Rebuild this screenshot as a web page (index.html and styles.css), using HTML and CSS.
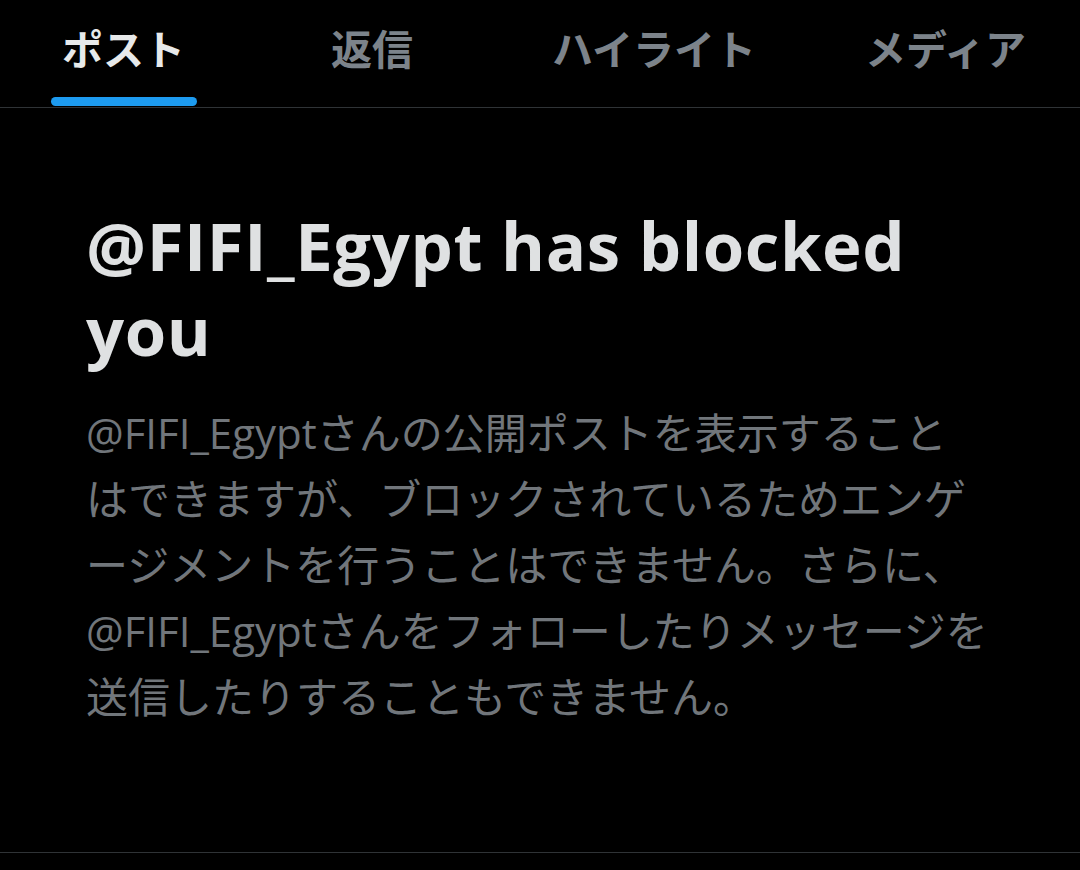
FILE: index.html
```html
<!DOCTYPE html>
<html lang="ja">
<head>
<meta charset="utf-8">
<title>Blocked</title>
<link rel="stylesheet" href="styles.css">
</head>
<body>
<nav class="tabs">
  <div class="tab tab-active"><span class="tab-label">ポスト</span><span class="tab-indicator"></span></div>
  <div class="tab"><span class="tab-label">返信</span></div>
  <div class="tab"><span class="tab-label">ハイライト</span></div>
  <div class="tab"><span class="tab-label">メディア</span></div>
</nav>
<main class="blocked">
  <h1 class="blocked-title">@FIFI_Egypt has blocked you</h1>
  <p class="blocked-text">@FIFI_Egyptさんの公開ポストを表示すること<br>はできますが、ブロックされているためエンゲ<br>ージメントを行うことはできません。さらに、<br>@FIFI_Egyptさんをフォローしたりメッセージを<br>送信したりすることもできません。</p>
</main>
<div class="bottom-rule"></div>
</body>
</html>
```

FILE: styles.css
```css
html, body {
  margin: 0;
  padding: 0;
  background: #000;
}
body {
  width: 1080px;
  height: 870px;
  overflow: hidden;
  font-family: "Open Sans", "Noto Sans CJK JP", sans-serif;
}
.tabs {
  display: grid;
  grid-template-columns: 247px 250px 314px 269px;
  height: 107px;
  border-bottom: 1px solid #2f3336;
}
.tab {
  position: relative;
  display: flex;
  justify-content: center;
  align-items: flex-start;
}
.tab-label {
  font-family: "Noto Sans CJK JP", sans-serif;
  font-weight: 700;
  font-size: 41px;
  line-height: 58px;
  margin-top: 18px;
  color: #7c838a;
}
.tab-active .tab-label {
  color: #e7e9ea;
}
.tab-indicator {
  position: absolute;
  left: 51px;
  width: 146px;
  bottom: 1px;
  height: 9px;
  border-radius: 5px;
  background: #1d9bf0;
}
.blocked {
  padding: 95px 0 0 86px;
}
.blocked-title {
  margin: 0;
  max-width: 880px;
  font-family: "Open Sans", sans-serif;
  font-weight: 700;
  font-size: 67px;
  line-height: 85px;
  color: #dfe1e2;
  letter-spacing: 0.6px;
}
.blocked-text {
  margin: 27px 0 0;
  font-size: 42px;
  line-height: 66px;
  color: #71767b;
  white-space: nowrap;
}
.bottom-rule {
  position: absolute;
  left: 0;
  top: 852px;
  width: 1080px;
  height: 1px;
  background: #2f3336;
}
```
